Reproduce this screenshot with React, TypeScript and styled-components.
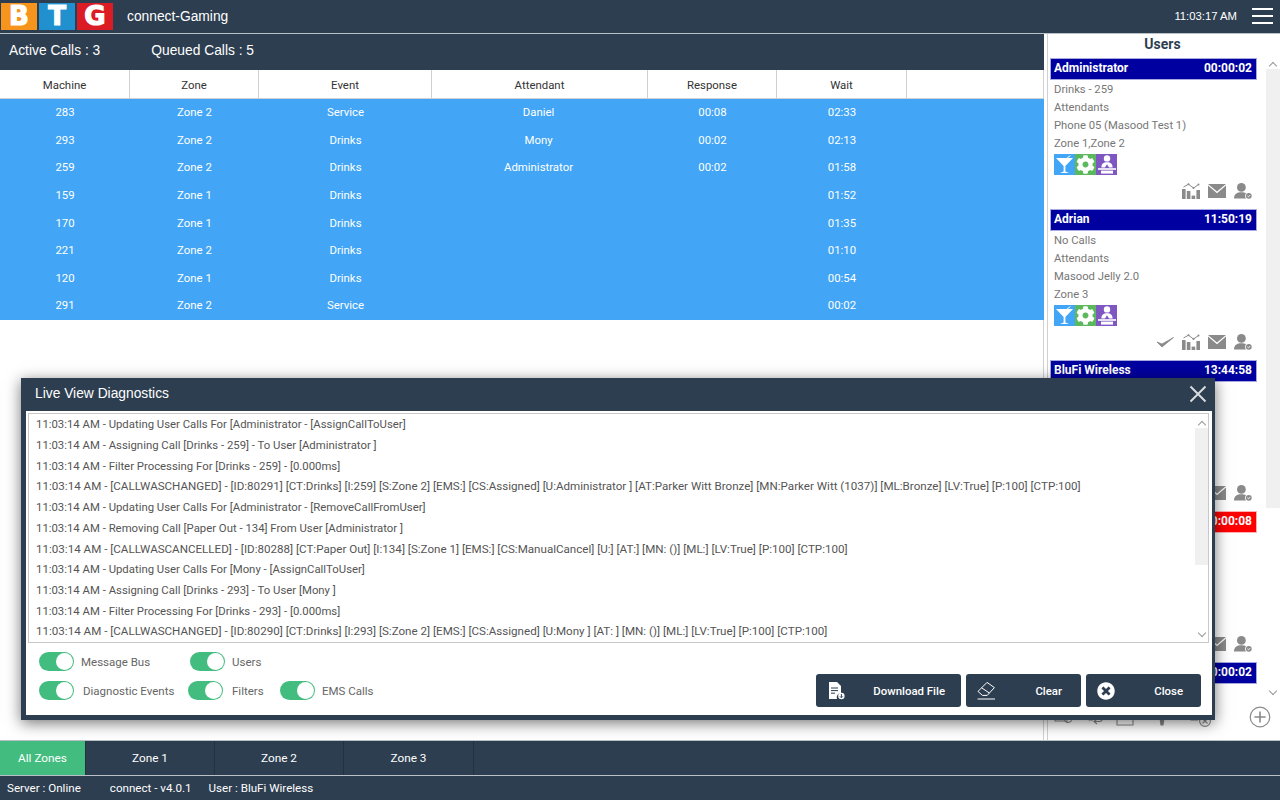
import styled, { createGlobalStyle } from "styled-components";
import { FaCog, FaTimesCircle } from "react-icons/fa";

const GlobalStyle = createGlobalStyle`
  html, body {
    margin: 0;
    padding: 0;
    height: 100%;
    overflow: hidden;
    background: #fff;
    font-family: "Roboto", "Liberation Sans", sans-serif;
  }
  * { box-sizing: border-box; }
`;

const NAVY = "#2d3e50";

type Call = { machine: number; zone: string; event: string; attendant?: string; response?: string; wait: string };

const calls: Call[] = [
  { machine: 283, zone: "Zone 2", event: "Service", attendant: "Daniel", response: "00:08", wait: "02:33" },
  { machine: 293, zone: "Zone 2", event: "Drinks", attendant: "Mony", response: "00:02", wait: "02:13" },
  { machine: 259, zone: "Zone 2", event: "Drinks", attendant: "Administrator", response: "00:02", wait: "01:58" },
  { machine: 159, zone: "Zone 1", event: "Drinks", wait: "01:52" },
  { machine: 170, zone: "Zone 1", event: "Drinks", wait: "01:35" },
  { machine: 221, zone: "Zone 2", event: "Drinks", wait: "01:10" },
  { machine: 120, zone: "Zone 1", event: "Drinks", wait: "00:54" },
  { machine: 291, zone: "Zone 2", event: "Service", wait: "00:02" },
];

const users = [
  { name: "Administrator", time: "00:00:02", lines: ["Drinks - 259", "Attendants", "Phone 05 (Masood Test 1)", "Zone 1,Zone 2"] },
  { name: "Adrian", time: "11:50:19", lines: ["No Calls", "Attendants", "Masood Jelly 2.0", "Zone 3"], check: true },
  { name: "BluFi Wireless", time: "13:44:58", lines: ["No Calls", "Attendants", "Phone 02", "Zone 1"] },
  { name: "Daniel", time: "00:00:08", lines: ["Service - 283", "Attendants", "Phone 03", "Zone 2"], alert: true },
  { name: "Mony", time: "00:00:02", lines: [] },
];

const logLines = [
  "11:03:14 AM - Updating User Calls For [Administrator - [AssignCallToUser]",
  "11:03:14 AM - Assigning Call [Drinks - 259] - To User [Administrator ]",
  "11:03:14 AM - Filter Processing For [Drinks - 259] - [0.000ms]",
  "11:03:14 AM - [CALLWASCHANGED] - [ID:80291] [CT:Drinks] [I:259] [S:Zone 2] [EMS:] [CS:Assigned] [U:Administrator ] [AT:Parker Witt Bronze] [MN:Parker Witt (1037)] [ML:Bronze] [LV:True] [P:100] [CTP:100]",
  "11:03:14 AM - Updating User Calls For [Administrator - [RemoveCallFromUser]",
  "11:03:14 AM - Removing Call [Paper Out - 134] From User [Administrator ]",
  "11:03:14 AM - [CALLWASCANCELLED] - [ID:80288] [CT:Paper Out] [I:134] [S:Zone 1] [EMS:] [CS:ManualCancel] [U:] [AT:] [MN: ()] [ML:] [LV:True] [P:100] [CTP:100]",
  "11:03:14 AM - Updating User Calls For [Mony - [AssignCallToUser]",
  "11:03:14 AM - Assigning Call [Drinks - 293] - To User [Mony ]",
  "11:03:14 AM - Filter Processing For [Drinks - 293] - [0.000ms]",
  "11:03:14 AM - [CALLWASCHANGED] - [ID:80290] [CT:Drinks] [I:293] [S:Zone 2] [EMS:] [CS:Assigned] [U:Mony ] [AT: ] [MN: ()] [ML:] [LV:True] [P:100] [CTP:100]",
];

const ChartIcon = () => (
  <svg width="18" height="16" viewBox="0 0 18 16" fill="#8a8a8a">
    <rect x="0" y="6" width="3.6" height="10" />
    <rect x="4.8" y="8" width="3.6" height="8" />
    <rect x="9.6" y="12.6" width="3.6" height="3.4" />
    <rect x="14.4" y="7" width="3.6" height="9" />
    <path d="M1.5 4L6.5 1.2L11.5 5L16.5 1.6" fill="none" stroke="#8a8a8a" strokeWidth="1" />
    <circle cx="6.5" cy="1.2" r="1" />
    <circle cx="11.5" cy="5" r="1" />
    <circle cx="16.5" cy="1.6" r="1" />
  </svg>
);

const MailIcon = () => (
  <svg width="18" height="14" viewBox="0 0 18 14">
    <path d="M0 0H18L9 7.4Z" fill="#8a8a8a" />
    <path d="M0 1.6V14H18V1.6L9 9.2Z" fill="#8a8a8a" />
  </svg>
);

const UserOkIcon = () => (
  <svg width="18" height="16" viewBox="0 0 18 16">
    <circle cx="7.4" cy="4.4" r="4.4" fill="#8a8a8a" />
    <path d="M0 15.5C0 11 3 9.2 7.4 9.2C9.4 9.2 10.8 9.6 12 10.2C10.8 11.8 10.8 14 12 15.5Z" fill="#8a8a8a" />
    <circle cx="14.8" cy="12.8" r="2.9" fill="#8a8a8a" />
    <path d="M13.4 12.8L14.5 13.9L16.2 12" fill="none" stroke="#fff" strokeWidth="0.9" />
  </svg>
);

const CheckIcon = () => (
  <svg width="18" height="12" viewBox="0 0 18 12">
    <path d="M1 6L6 11L17.5 1.5L6 8Z" fill="#8a8a8a" stroke="#8a8a8a" strokeWidth="0.8" />
  </svg>
);

const MartiniIcon = () => (
  <svg width="19" height="19" viewBox="0 0 19 19" fill="#fff">
    <path d="M1 3H18L10.4 11V16.4L14 18H5L8.6 16.4V11Z" />
    <path d="M12 3L15.4 0.6" stroke="#fff" strokeWidth="1" />
  </svg>
);

const AttendantIcon = () => (
  <svg width="18" height="19" viewBox="0 0 18 19" fill="#fff">
    <circle cx="9" cy="3.4" r="3.2" />
    <path d="M3.4 12.6C3.4 8.6 5.4 7.2 9 7.2C12.6 7.2 14.6 8.6 14.6 12.6H11L9 9.2L7 12.6Z" />
    <rect x="0" y="13.2" width="18" height="1.6" />
    <rect x="3" y="15.6" width="12" height="3" />
  </svg>
);

const FileDownIcon = () => (
  <svg width="18" height="18" viewBox="-2 0 18 18">
    <path d="M0 0H8L12 4V11A4.4 4.4 0 0 0 8 17H0Z" fill="#fff" />
    <path d="M2 6H9M2 8.6H9M2 11.2H6" stroke={NAVY} strokeWidth="1" />
    <circle cx="12.4" cy="14" r="3.2" fill="#fff" />
    <path d="M12.4 12V15.4M11 14.4L12.4 15.8L13.8 14.4" stroke={NAVY} strokeWidth="1" fill="none" />
  </svg>
);

const EraserIcon = () => (
  <svg width="19" height="19" viewBox="0 0 19 19" fill="none" stroke="#fff" strokeWidth="1">
    <path d="M1 10.4L10 1.4L17.4 6.6L10.2 14.4H5.4Z" />
    <path d="M4.6 6.8L12.4 12" />
    <path d="M0.6 18H18" />
  </svg>
);

const DeskIcons = () => (
  <svg width="158" height="16" viewBox="0 0 158 16" fill="none" stroke="#8a8a8a" strokeWidth="1.1">
    <path d="M2 1V9H15M19 7A4 4 0 1 1 17 3" />
    <path d="M36 1V8H40M44 7L41 9.5L44 12M41 9.5H47A3.4 3.4 0 0 0 47 3" />
    <path d="M64 1V13H80V1" />
    <path d="M107 0H111V6L110 13H108L107 6Z" fill="#8a8a8a" />
    <path d="M138 1V8H145" />
    <circle cx="152" cy="9" r="5.4" />
    <path d="M149.5 6.5L154.5 11.5M154.5 6.5L149.5 11.5" />
  </svg>
);

export default function App() {
  return (
    <Page>
      <GlobalStyle />
      <TopBar>
        <Logo>
          <LogoLetter $bg="#f7941d">B</LogoLetter>
          <LogoLetter $bg="#2190cf">T</LogoLetter>
          <LogoLetter $bg="#dc1c24">G</LogoLetter>
        </Logo>
        <AppName>connect-Gaming</AppName>
        <Clock>11:03:17 AM</Clock>
        <Burger>
          <i />
          <i />
          <i />
        </Burger>
      </TopBar>

      <Main>
        <CallsPane>
          <CallsBar>
            <span>Active Calls : 3</span>
            <span>Queued Calls : 5</span>
          </CallsBar>
          <HeadRow>
            <HeadCell $w={130}>Machine</HeadCell>
            <HeadCell $w={129}>Zone</HeadCell>
            <HeadCell $w={173}>Event</HeadCell>
            <HeadCell $w={216}>Attendant</HeadCell>
            <HeadCell $w={129}>Response</HeadCell>
            <HeadCell $w={130}>Wait</HeadCell>
          </HeadRow>
          <Rows>
            {calls.map((c) => (
              <Row key={c.machine}>
                <Cell $w={130}>{c.machine}</Cell>
                <Cell $w={129}>{c.zone}</Cell>
                <Cell $w={173}>{c.event}</Cell>
                <Cell $w={216}>{c.attendant}</Cell>
                <Cell $w={129}>{c.response}</Cell>
                <Cell $w={130}>{c.wait}</Cell>
              </Row>
            ))}
          </Rows>
        </CallsPane>

        <UsersPane>
          <UsersTitle>Users</UsersTitle>
          <UsersBody>
            <UserList>
              {users.map((u) => (
                <UserCard key={u.name}>
                  <UserHead $alert={u.alert}>
                    <span>{u.name}</span>
                    <span>{u.time}</span>
                  </UserHead>
                  {u.lines.length > 0 && (
                    <>
                      <UserLines>
                        {u.lines.map((l) => (
                          <UserLine key={l}>{l}</UserLine>
                        ))}
                      </UserLines>
                      <Skills>
                        <Skill $bg="#42a5f5">
                          <MartiniIcon />
                        </Skill>
                        <Skill $bg="#5cb85c">
                          <FaCog size={19} color="#fff" />
                        </Skill>
                        <Skill $bg="#7e57c2">
                          <AttendantIcon />
                        </Skill>
                      </Skills>
                      <UserActions>
                        {u.check && <CheckIcon />}
                        <ChartIcon />
                        <MailIcon />
                        <UserOkIcon />
                      </UserActions>
                    </>
                  )}
                </UserCard>
              ))}
            </UserList>
            <ScrollGutter>
              <ArrowUp />
              <ScrollThumb />
              <ArrowDown />
            </ScrollGutter>
          </UsersBody>
          <UsersFoot>
            <DeskIcons />
            <AddButton>
              <svg width="22" height="22" viewBox="0 0 22 22" fill="none" stroke="#8a8a8a" strokeWidth="1.2">
                <circle cx="11" cy="11" r="9.8" />
                <path d="M11 5.4V16.6M5.4 11H16.6" strokeWidth="1.6" />
              </svg>
            </AddButton>
          </UsersFoot>
        </UsersPane>
      </Main>

      <ZoneTabs>
        <ZoneTab $active $w={86}>All Zones</ZoneTab>
        <ZoneTab $w={129}>Zone 1</ZoneTab>
        <ZoneTab $w={129}>Zone 2</ZoneTab>
        <ZoneTab $w={130}>Zone 3</ZoneTab>
      </ZoneTabs>

      <StatusBar>
        <span>Server : Online</span>
        <span>connect - v4.0.1</span>
        <span>User : BluFi Wireless</span>
      </StatusBar>

      <Dialog>
        <DialogTitle>
          <span>Live View Diagnostics</span>
          <svg width="18" height="18" viewBox="0 0 18 18" stroke="#d8dcdf" strokeWidth="2">
            <path d="M1.5 1.5L16.5 16.5M16.5 1.5L1.5 16.5" />
          </svg>
        </DialogTitle>
        <DialogBody>
          <LogBox>
            <LogList>
              {logLines.map((l, i) => (
                <LogLine key={i} $long={l.includes("[CALLWAS")}>
                  {l}
                </LogLine>
              ))}
            </LogList>
            <LogGutter>
              <ArrowUp />
              <LogThumb />
              <ArrowDown />
            </LogGutter>
          </LogBox>
          <DialogFoot>
            <Toggles>
              <ToggleRow>
                <Toggle $w={151} $gap={7}>
                  <Switch />
                  Message Bus
                </Toggle>
                <Toggle $gap={7}>
                  <Switch />
                  Users
                </Toggle>
              </ToggleRow>
              <ToggleRow>
                <Toggle $w={149} $gap={9}>
                  <Switch />
                  Diagnostic Events
                </Toggle>
                <Toggle $w={92} $gap={9}>
                  <Switch />
                  Filters
                </Toggle>
                <Toggle $gap={7}>
                  <Switch />
                  EMS Calls
                </Toggle>
              </ToggleRow>
            </Toggles>
            <Buttons>
              <ActionButton $w={145} $pr={16}>
                <FileDownIcon />
                <span>Download File</span>
              </ActionButton>
              <ActionButton $w={115} $pr={19}>
                <EraserIcon />
                <span>Clear</span>
              </ActionButton>
              <ActionButton $w={115} $pr={18}>
                <FaTimesCircle size={18} color="#fff" />
                <span>Close</span>
              </ActionButton>
            </Buttons>
          </DialogFoot>
        </DialogBody>
      </Dialog>
    </Page>
  );
}

const Page = styled.div`
  position: relative;
  width: 1280px;
  height: 800px;
  display: flex;
  flex-direction: column;
  overflow: hidden;
`;

const TopBar = styled.header`
  height: 34px;
  flex-shrink: 0;
  display: flex;
  align-items: center;
  padding: 0 7px 1px 1px;
  background: ${NAVY};
  border-bottom: 1px solid #b9c0c6;
  color: #fff;
`;

const Logo = styled.div`
  display: flex;
  gap: 2px;
`;

const LogoLetter = styled.span<{ $bg: string }>`
  width: 36px;
  height: 27px;
  display: flex;
  align-items: center;
  justify-content: center;
  background: ${(p) => p.$bg};
  color: #fff;
  font: 700 26px "DejaVu Sans", sans-serif;
  -webkit-text-stroke: 1.2px #fff;
`;

const AppName = styled.div`
  margin-left: 14px;
  font: 13.8px "Liberation Sans", sans-serif;
`;

const Clock = styled.div`
  margin-left: auto;
  margin-right: 15px;
  font: 11.3px "Liberation Sans", sans-serif;
`;

const Burger = styled.div`
  width: 21px;
  display: flex;
  flex-direction: column;
  gap: 4.5px;

  i {
    display: block;
    height: 2.5px;
    background: #fff;
  }
`;

const Main = styled.main`
  height: 706px;
  flex-shrink: 0;
  display: flex;
`;

const CallsPane = styled.section`
  width: 1047px;
  flex-shrink: 0;
  border-right: 3px solid #fff;
  box-shadow: inset -1px 0 0 #d0d0d0;
`;

const CallsBar = styled.div`
  width: 1044px;
  height: 36px;
  display: flex;
  align-items: center;
  gap: 51px;
  padding: 0 0 4px 9px;
  background: ${NAVY};
  color: #fff;
  font: 13.8px "Liberation Sans", sans-serif;
`;

const HeadRow = styled.div`
  height: 29px;
  display: flex;
  border-bottom: 1px solid #d0d0d0;
`;

const HeadCell = styled.div<{ $w: number }>`
  width: ${(p) => p.$w}px;
  display: flex;
  align-items: center;
  justify-content: center;
  padding-top: 2px;
  border-right: 1px solid #d0d0d0;
  color: #333;
  font-size: 11.4px;
`;

const Rows = styled.div`
  width: 1044px;
  background: #42a5f5;
`;

const Row = styled.div`
  height: 27.6px;
  display: flex;
`;

const Cell = styled.div<{ $w: number }>`
  width: ${(p) => p.$w}px;
  display: flex;
  align-items: center;
  justify-content: center;
  padding-bottom: 1px;
  color: #fff;
  font-size: 11.4px;

  &:nth-child(4) {
    padding-right: 3px;
  }
`;

const UsersPane = styled.aside`
  flex: 1;
  min-width: 0;
  display: flex;
  flex-direction: column;
  border-left: 1px solid #d0d0d0;
`;

const UsersTitle = styled.div`
  height: 24px;
  flex-shrink: 0;
  padding: 0 3px 4px 0;
  display: flex;
  align-items: center;
  justify-content: center;
  color: ${NAVY};
  font-size: 14px;
  font-weight: 700;
`;

const UsersBody = styled.div`
  height: 642px;
  flex-shrink: 0;
  display: flex;
`;

const UserList = styled.div`
  width: 218px;
  padding: 0 9px 0 2px;
  overflow: hidden;
`;

const UserCard = styled.article`
  height: 151px;
`;

const UserHead = styled.div<{ $alert?: boolean }>`
  height: 21.5px;
  display: flex;
  align-items: center;
  justify-content: space-between;
  padding: 0 4px 2px 3px;
  background: ${(p) => (p.$alert ? "#ff0000" : "#0000a0")};
  border: 1px solid ${(p) => (p.$alert ? "#ffb0b0" : "#a8a8e0")};
  color: #fff;
  font-size: 12px;
  font-weight: 700;
`;

const UserLines = styled.div`
  padding: 1px 0 0 4px;
`;

const UserLine = styled.div`
  height: 18.2px;
  line-height: 18.2px;
  color: #777;
  font-size: 11.25px;
`;

const Skills = styled.div`
  display: flex;
  margin: 0.5px 0 0 4px;
`;

const Skill = styled.div<{ $bg: string }>`
  width: 21px;
  height: 21px;
  display: flex;
  align-items: center;
  justify-content: center;
  background: ${(p) => p.$bg};
`;

const UserActions = styled.div`
  height: 22px;
  margin-top: 5px;
  padding-right: 5px;
  display: flex;
  align-items: center;
  justify-content: flex-end;
  gap: 8px;
`;

const ScrollGutter = styled.div`
  width: 14px;
  display: flex;
  flex-direction: column;
  align-items: stretch;
`;

const ScrollThumb = styled.div`
  height: 439px;
  background: #f0f0f0;
`;

const LogThumb = styled(ScrollThumb)`
  height: 137px;
`;

const ArrowUp = styled.div`
  height: 11px;
  position: relative;

  &::after {
    content: "";
    position: absolute;
    left: 4px;
    top: 5px;
    width: 5px;
    height: 5px;
    border: solid #999;
    border-width: 1px 0 0 1px;
    transform: rotate(45deg);
  }
`;

const ArrowDown = styled(ArrowUp)`
  margin-top: auto;
  margin-bottom: 2px;

  &::after {
    top: 1px;
    transform: rotate(225deg);
  }
`;

const UsersFoot = styled.div`
  flex: 1;
  display: flex;
  align-items: flex-end;
  justify-content: space-between;
  padding: 0 9px 12px 5px;
`;

const AddButton = styled.div`
  display: flex;
`;

const ZoneTabs = styled.nav`
  height: 36px;
  flex-shrink: 0;
  display: flex;
  background: ${NAVY};
  border-top: 1px solid #b9c0c6;
  border-bottom: 1px solid #b9c0c6;
`;

const ZoneTab = styled.div<{ $active?: boolean; $w: number }>`
  width: ${(p) => p.$w}px;
  display: flex;
  align-items: center;
  justify-content: center;
  background: ${(p) => (p.$active ? "#42bd7f" : "transparent")};
  border-right: 1px solid #243240;
  color: #fff;
  font-size: 11.8px;
`;

const StatusBar = styled.footer`
  height: 24px;
  flex-shrink: 0;
  display: flex;
  align-items: center;
  gap: 29px;
  padding-left: 7px;
  background: ${NAVY};
  color: #fff;
  font-size: 11.6px;

  span:last-child {
    margin-left: -12px;
  }
`;

const Dialog = styled.div`
  position: absolute;
  left: 21px;
  top: 378px;
  width: 1194px;
  height: 342px;
  display: flex;
  flex-direction: column;
  padding: 0 3px 5px 5px;
  background: ${NAVY};
  box-shadow: 0 3px 14px rgba(0, 0, 0, 0.55);
`;

const DialogTitle = styled.div`
  height: 33px;
  display: flex;
  align-items: center;
  justify-content: space-between;
  padding: 0 5px 2px 9px;
  color: #fff;
  font: 13.8px "Liberation Sans", sans-serif;
`;

const DialogBody = styled.div`
  flex: 1;
  min-height: 0;
  display: flex;
  flex-direction: column;
  background: #fff;
  padding: 2px 3px 0 2px;
`;

const LogBox = styled.div`
  height: 230px;
  display: flex;
  border: 1px solid #c8c8c8;
`;

const LogList = styled.div`
  flex: 1;
  min-width: 0;
  padding: 0.4px 0 0 7px;
  overflow: hidden;
`;

const LogLine = styled.div<{ $long?: boolean }>`
  height: 20.7px;
  line-height: 20.7px;
  color: #555;
  font-size: ${(p) => (p.$long ? "11.6px" : "11.35px")};
  white-space: nowrap;
`;

const LogGutter = styled(ScrollGutter)`
  width: 13px;
  padding: 3px 0 0;
`;

const DialogFoot = styled.div`
  flex: 1;
  display: flex;
  justify-content: space-between;
  padding: 9px 8px 8px 11px;
`;

const Toggles = styled.div`
  display: flex;
  flex-direction: column;
  gap: 10px;
`;

const ToggleRow = styled.div`
  display: flex;
`;

const Toggle = styled.label<{ $w?: number; $gap: number }>`
  width: ${(p) => (p.$w ? `${p.$w}px` : "auto")};
  display: flex;
  align-items: center;
  gap: ${(p) => p.$gap}px;
  color: #666;
  font-size: 11.5px;
`;

const Switch = styled.span`
  position: relative;
  width: 35px;
  height: 19px;
  flex-shrink: 0;
  border-radius: 10px;
  background: #42bd7f;

  &::after {
    content: "";
    position: absolute;
    right: 1px;
    top: 1px;
    width: 17px;
    height: 17px;
    border-radius: 50%;
    background: #fff;
  }
`;

const Buttons = styled.div`
  display: flex;
  gap: 5px;
  align-items: flex-end;
`;

const ActionButton = styled.button<{ $w: number; $pr: number }>`
  width: ${(p) => p.$w}px;
  height: 33px;
  display: flex;
  align-items: center;
  justify-content: space-between;
  padding: 0 ${(p) => p.$pr}px 0 11px;
  border: 0;
  border-radius: 3px;
  background: ${NAVY};
  color: #fff;
  font: 500 11.4px "Roboto", sans-serif;
`;
